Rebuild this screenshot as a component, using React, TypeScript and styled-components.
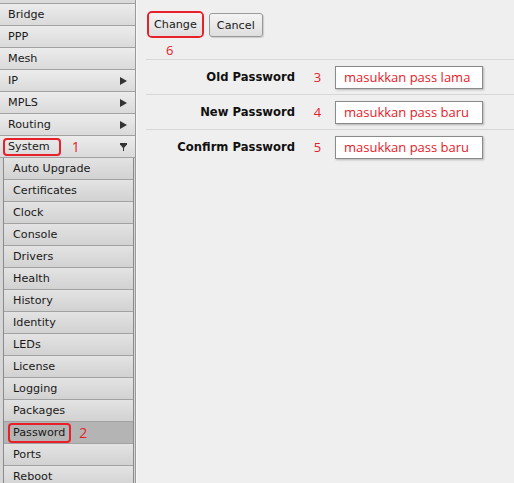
import React, {FC} from 'react'
import styled, {createGlobalStyle} from 'styled-components'

const GlobalStyle = createGlobalStyle`
  html, body {
    margin: 0;
    padding: 0;
    height: 483px;
    overflow: hidden;
    background: #efefef;
    font-family: "DejaVu Sans", Verdana, sans-serif;
  }
`;

const topMenu = [
    {name: 'Bridge'},
    {name: 'PPP'},
    {name: 'Mesh'},
    {name: 'IP', arrow: true},
    {name: 'MPLS', arrow: true},
    {name: 'Routing', arrow: true},
];

const systemMenu = [
    'Auto Upgrade', 'Certificates', 'Clock', 'Console', 'Drivers', 'Health',
    'History', 'Identity', 'LEDs', 'License', 'Logging', 'Packages',
    'Password', 'Ports', 'Reboot',
];

const fields = [
    {label: 'Old Password', num: '3', hint: 'masukkan pass lama'},
    {label: 'New Password', num: '4', hint: 'masukkan pass baru'},
    {label: 'Confirm Password', num: '5', hint: 'masukkan pass baru'},
];

const RightArrow: FC = () => (
    <svg width="7" height="8" viewBox="0 0 7 8">
        <polygon points="0,0 7,4 0,8" fill="#333"/>
    </svg>
);

const DownArrow: FC = () => (
    <svg width="7" height="8" viewBox="0 0 7 8">
        <rect x="0" y="0" width="7" height="2" fill="#333"/>
        <polygon points="0.5,2 6.5,2 3.5,5.5" fill="#333"/>
        <rect x="3" y="5" width="1" height="3" fill="#333"/>
    </svg>
);

const App: FC = () => {
    return (
        <>
            <GlobalStyle/>
            <Page>
                <Sidebar>
                    <NavList>
                        {/* bottom edge of the item scrolled above the view */}
                        <NavEdge/>
                        {topMenu.map(item => (
                            <NavItem key={item.name}>
                                <span>{item.name}</span>
                                {item.arrow && <RightArrow/>}
                            </NavItem>
                        ))}
                        <NavItem>
                            <LabelGroup>
                                <Mark $left={3} $right={9} $h={14}>System</Mark>
                                <Step $size={14} $gap={11}>1</Step>
                            </LabelGroup>
                            <DownArrow/>
                        </NavItem>
                    </NavList>
                    <SubMenu>
                        {systemMenu.map(name => (
                            <SubItem key={name} $active={name === 'Password'}>
                                {name === 'Password' ? (
                                    <LabelGroup>
                                        <Mark $left={3} $right={4} $h={16}>{name}</Mark>
                                        <Step $size={14} $gap={8}>2</Step>
                                    </LabelGroup>
                                ) : name}
                            </SubItem>
                        ))}
                    </SubMenu>
                </Sidebar>
                <Main>
                    <Toolbar>
                        <ChangeCol>
                            <ChangeMark>
                                <Button $pad={5}>Change</Button>
                            </ChangeMark>
                            <Six>6</Six>
                        </ChangeCol>
                        <Button $pad={7} $framed>Cancel</Button>
                    </Toolbar>
                    <Form>
                        {fields.map(f => (
                            <FormRow key={f.label}>
                                <FieldLabel>{f.label}</FieldLabel>
                                <FieldNum>{f.num}</FieldNum>
                                <Field>{f.hint}</Field>
                            </FormRow>
                        ))}
                    </Form>
                </Main>
            </Page>
        </>
    )
};

export default App;


const Page = styled.div`
  display: flex;
  width: 514px;
  height: 483px;
  overflow: hidden;
`;

const Sidebar = styled.nav`
  flex: none;
  width: 135px;
  height: 483px;
  background: #d6d6d6;
  border-right: 1px solid #9a9a9a;
  overflow: hidden;
`;

const NavList = styled.div``;

const NavEdge = styled.div`
  height: 3px;
  background: #dadada;
  border-bottom: 1px solid #a2a2a2;
`;

const NavItem = styled.div`
  height: 21px;
  display: flex;
  align-items: center;
  justify-content: space-between;
  padding: 0 8px 0 8px;
  background: linear-gradient(#ececec, #dadada);
  border-bottom: 1px solid #a2a2a2;
  font-size: 11.2px;
  color: #1a1a1a;
`;

const LabelGroup = styled.span`
  display: inline-flex;
  align-items: center;
`;

const Mark = styled.span<{ $left: number; $right: number; $h: number }>`
  display: inline-block;
  line-height: ${p => p.$h}px;
  padding: 0 ${p => p.$right}px 0 ${p => p.$left}px;
  margin-left: ${p => -(p.$left + 2)}px;
  border: 2px solid #e8202a;
  border-radius: 4px;
`;

const Step = styled.span<{ $size: number; $gap: number }>`
  margin-left: ${p => p.$gap}px;
  font-family: "Open Sans", "Noto Sans", sans-serif;
  font-size: ${p => p.$size}px;
  color: #e8202a;
  line-height: 14px;
`;

const SubMenu = styled.div`
  margin: 0 1px 0 3px;
  border-left: 1px solid #8a8a8a;
  border-right: 1px solid #8a8a8a;
`;

const SubItem = styled.div<{ $active?: boolean }>`
  height: 21px;
  display: flex;
  align-items: center;
  padding-left: 9px;
  background: ${p => p.$active ? '#b4b4b4' : 'linear-gradient(#e3e3e3, #d2d2d2)'};
  border-bottom: 1px solid #a2a2a2;
  font-size: 11.2px;
  color: #1a1a1a;
`;

const Main = styled.main`
  flex: 1;
  padding: 11px 0 0 9px;
  border-left: 1px solid #f7f7f7;
`;

const Toolbar = styled.div`
  display: flex;
  align-items: flex-start;
  gap: 5px;
  margin-left: 1px;
  height: 48px;
`;

const ChangeCol = styled.div`
  display: flex;
  flex-direction: column;
`;

const ChangeMark = styled.div`
  display: flex;
  border: 2px solid #e8202a;
  border-radius: 5px;
`;

const Button = styled.button<{ $pad: number; $framed?: boolean }>`
  height: ${p => p.$framed ? 24 : 23}px;
  margin-top: ${p => p.$framed ? 2 : 0}px;
  padding: 0 ${p => p.$pad}px;
  font-family: "DejaVu Sans", Verdana, sans-serif;
  font-size: 11.2px;
  color: #1a1a1a;
  background: linear-gradient(#f4f4f4, #dedede);
  border: ${p => p.$framed ? '1px solid #9a9a9a' : 'none'};
  border-radius: 3px;
  box-shadow: ${p => p.$framed ? '1px 1px 1px rgba(0,0,0,0.15)' : 'none'};
`;

const Six = styled.span`
  padding-left: 19px;
  margin-top: 5px;
  font-family: "Open Sans", "Noto Sans", sans-serif;
  font-size: 13px;
  line-height: 14px;
  color: #e8202a;
`;

const Form = styled.div`
  display: flex;
  flex-direction: column;
`;

const FormRow = styled.div`
  display: flex;
  align-items: center;
  height: 34px;
  border-top: 1px solid #d7d7d7;
`;

const FieldLabel = styled.span`
  width: 149px;
  text-align: right;
  font-size: 11.6px;
  font-weight: bold;
  color: #111;
`;

const FieldNum = styled.span`
  width: 35px;
  padding-left: 5px;
  text-align: center;
  font-family: "Open Sans", "Noto Sans", sans-serif;
  font-size: 13px;
  color: #e8202a;
`;

const Field = styled.div`
  box-sizing: border-box;
  width: 148px;
  height: 23px;
  padding-left: 8px;
  display: flex;
  align-items: center;
  background: #fff;
  border: 1px solid #8a8a8a;
  box-shadow: 1px 1px 2px rgba(0,0,0,0.25);
  font-family: "Open Sans", "Noto Sans", sans-serif;
  font-size: 13px;
  color: #e8202a;
`;
